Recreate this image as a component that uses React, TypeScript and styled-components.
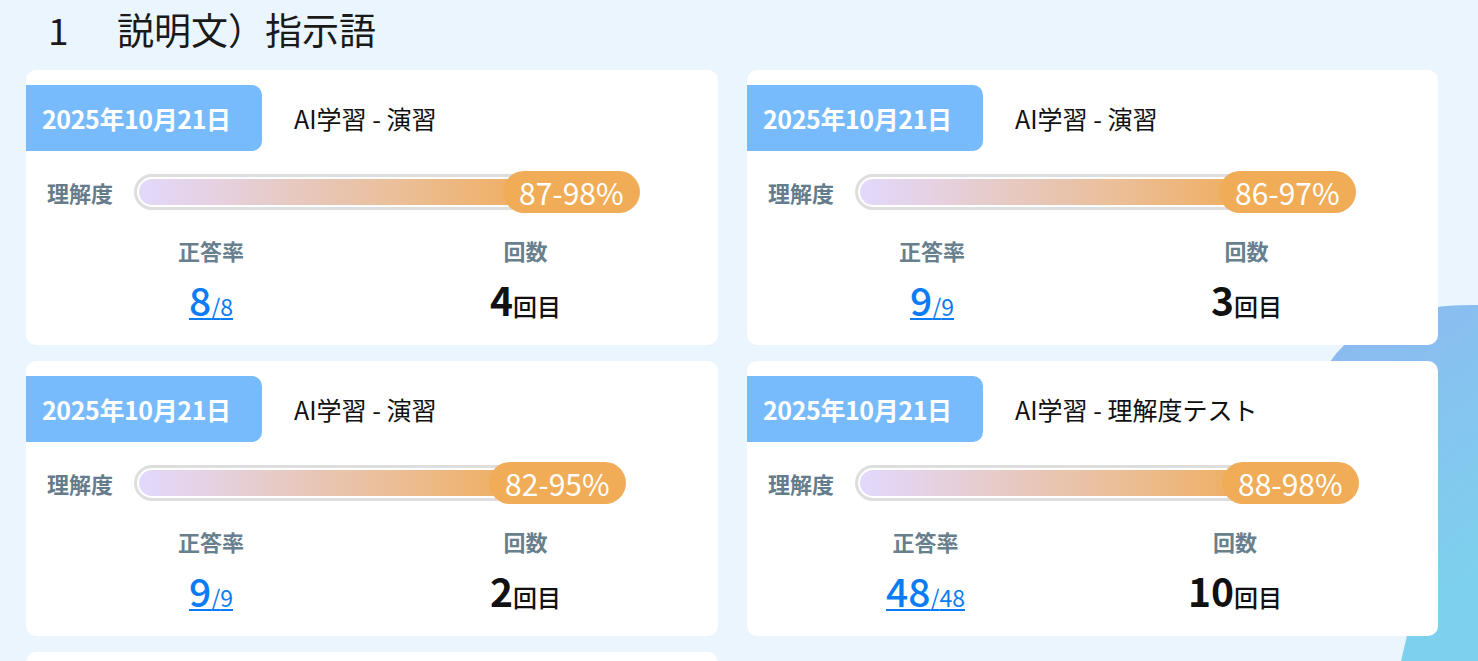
import React from 'react';
import styled, { createGlobalStyle } from 'styled-components';

type TRecord = {
  date: string;
  title: string;
  range: string;
  barWidth: number;
  correct: number;
  total: number;
  count: number;
};

const records: TRecord[] = [
  { date: '2025年10月21日', title: 'AI学習 - 演習', range: '87-98%', barWidth: 399, correct: 8, total: 8, count: 4 },
  { date: '2025年10月21日', title: 'AI学習 - 演習', range: '86-97%', barWidth: 394, correct: 9, total: 9, count: 3 },
  { date: '2025年10月21日', title: 'AI学習 - 演習', range: '82-95%', barWidth: 385, correct: 9, total: 9, count: 2 },
  { date: '2025年10月21日', title: 'AI学習 - 理解度テスト', range: '88-98%', barWidth: 397, correct: 48, total: 48, count: 10 },
  { date: '2025年10月20日', title: 'AI学習 - 演習', range: '80-92%', barWidth: 380, correct: 7, total: 8, count: 1 },
];

const GlobalStyle = createGlobalStyle`
  html, body {
    margin: 0;
    padding: 0;
    background-color: #ebf5fe;
    overflow: hidden;
  }
  body {
    font-family: "Noto Sans CJK JP", "Noto Sans", sans-serif;
    color: #111;
  }
`;

function Blob() {
  return (
    <BlobSvg width="178" height="371" viewBox="0 0 178 371">
      <defs>
        <linearGradient id="blobFill" x1="0" y1="0" x2="0.3" y2="1">
          <stop offset="0" stopColor="#8db8f0" />
          <stop offset="1" stopColor="#7dd1ee" />
        </linearGradient>
      </defs>
      <path d="M178 15 C130 14 62 24 30 72 L112 320 L106 350 L101 371 L178 371 Z" fill="url(#blobFill)" />
    </BlobSvg>
  );
}

function RecordCard({ item }: { item: TRecord }) {
  return (
    <Card>
      <CardHead>
        <DateTag>{item.date}</DateTag>
        <Title>{item.title}</Title>
      </CardHead>
      <ProgressRow>
        <RowLabel>理解度</RowLabel>
        <Track style={{ width: item.barWidth }}>
          <TrackFill />
        </Track>
        <RangeBadge>{item.range}</RangeBadge>
      </ProgressRow>
      <StatRow>
        <Stat>
          <StatLabel>正答率</StatLabel>
          <ScoreLink href="#">
            <Big>{item.correct}</Big>
            <Small>/{item.total}</Small>
          </ScoreLink>
        </Stat>
        <Stat>
          <StatLabel>回数</StatLabel>
          <Count>
            <BigBold>{item.count}</BigBold>
            <Unit>回目</Unit>
          </Count>
        </Stat>
      </StatRow>
    </Card>
  );
}

export default function App() {
  return (
    <Page>
      <GlobalStyle />
      <Blob />
      <Heading>
        <HeadingNo>1</HeadingNo>
        <span>説明文）指示語</span>
      </Heading>
      <CardGrid>
        {records.map((item, i) => (
          <RecordCard key={`record-${i}`} item={item} />
        ))}
      </CardGrid>
    </Page>
  );
}

const Page = styled.div`
  position: relative;
  width: 1478px;
  height: 661px;
  overflow: hidden;
`;

const BlobSvg = styled.svg`
  position: absolute;
  right: 0;
  bottom: 0;
  z-index: 0;
`;

const Heading = styled.h1`
  position: relative;
  z-index: 1;
  display: flex;
  align-items: center;
  margin: 0;
  padding-left: 48px;
  height: 58px;
  font-size: 37px;
  font-weight: 400;
  color: #1a1a1a;
`;

const HeadingNo = styled.span`
  width: 69px;
`;

const CardGrid = styled.div`
  position: relative;
  z-index: 1;
  display: grid;
  grid-template-columns: 692px 691px;
  column-gap: 29px;
  row-gap: 16px;
  padding: 12px 40px 0 26px;
`;

const Card = styled.div`
  height: 275px;
  box-sizing: border-box;
  padding-top: 15px;
  background-color: #fff;
  border-radius: 10px;
`;

const CardHead = styled.div`
  display: flex;
  align-items: center;
`;

const DateTag = styled.div`
  display: flex;
  align-items: center;
  width: 236px;
  height: 66px;
  box-sizing: border-box;
  padding-left: 16px;
  background-color: #78bbfd;
  border-radius: 0 10px 10px 0;
  color: #fff;
  font-size: 25px;
  font-weight: 700;
  letter-spacing: -0.4px;
  white-space: nowrap;
`;

const Title = styled.div`
  margin-left: 32px;
  font-size: 25px;
  font-weight: 400;
  color: #111;
`;

const ProgressRow = styled.div`
  display: flex;
  align-items: center;
  height: 42px;
  margin-top: 20px;
  padding-left: 21px;
`;

const RowLabel = styled.div`
  width: 87px;
  font-size: 22px;
  font-weight: 700;
  color: #647c8b;
`;

const Track = styled.div`
  height: 36px;
  box-sizing: border-box;
  padding: 2px;
  border: 3px solid #dedede;
  border-radius: 18px;
  background-color: #fff;
`;

const TrackFill = styled.div`
  height: 100%;
  border-radius: 13px;
  background: linear-gradient(90deg, #e3d9fd 0%, #e6cbc9 35%, #ebbd93 70%, #efae5f 100%);
`;

const RangeBadge = styled.div`
  display: flex;
  align-items: center;
  height: 42px;
  margin-left: -30px;
  padding: 0 16px;
  border-radius: 21px;
  background-color: #f0ac57;
  color: #fff;
  font-size: 30px;
  font-weight: 400;
`;

const StatRow = styled.div`
  display: grid;
  grid-template-columns: 218px 317px;
  justify-items: end;
  margin-top: 22px;
`;

const Stat = styled.div`
  display: flex;
  flex-direction: column;
  align-items: center;
`;

const StatLabel = styled.div`
  font-size: 22px;
  font-weight: 700;
  line-height: 30px;
  color: #687f8e;
`;

const ScoreLink = styled.a`
  margin-top: 11px;
  color: #0b7cf6;
  text-decoration: underline;
  text-decoration-thickness: 2px;
  text-underline-offset: 2px;
  line-height: 46px;
  white-space: nowrap;
`;

const Big = styled.span`
  font-size: 39px;
  font-weight: 500;
`;

const Small = styled.span`
  font-size: 23px;
`;

const Count = styled.div`
  margin-top: 11px;
  line-height: 46px;
  white-space: nowrap;
  color: #111;
`;

const BigBold = styled.span`
  font-size: 39px;
  font-weight: 700;
`;

const Unit = styled.span`
  font-size: 24px;
  font-weight: 500;
`;
